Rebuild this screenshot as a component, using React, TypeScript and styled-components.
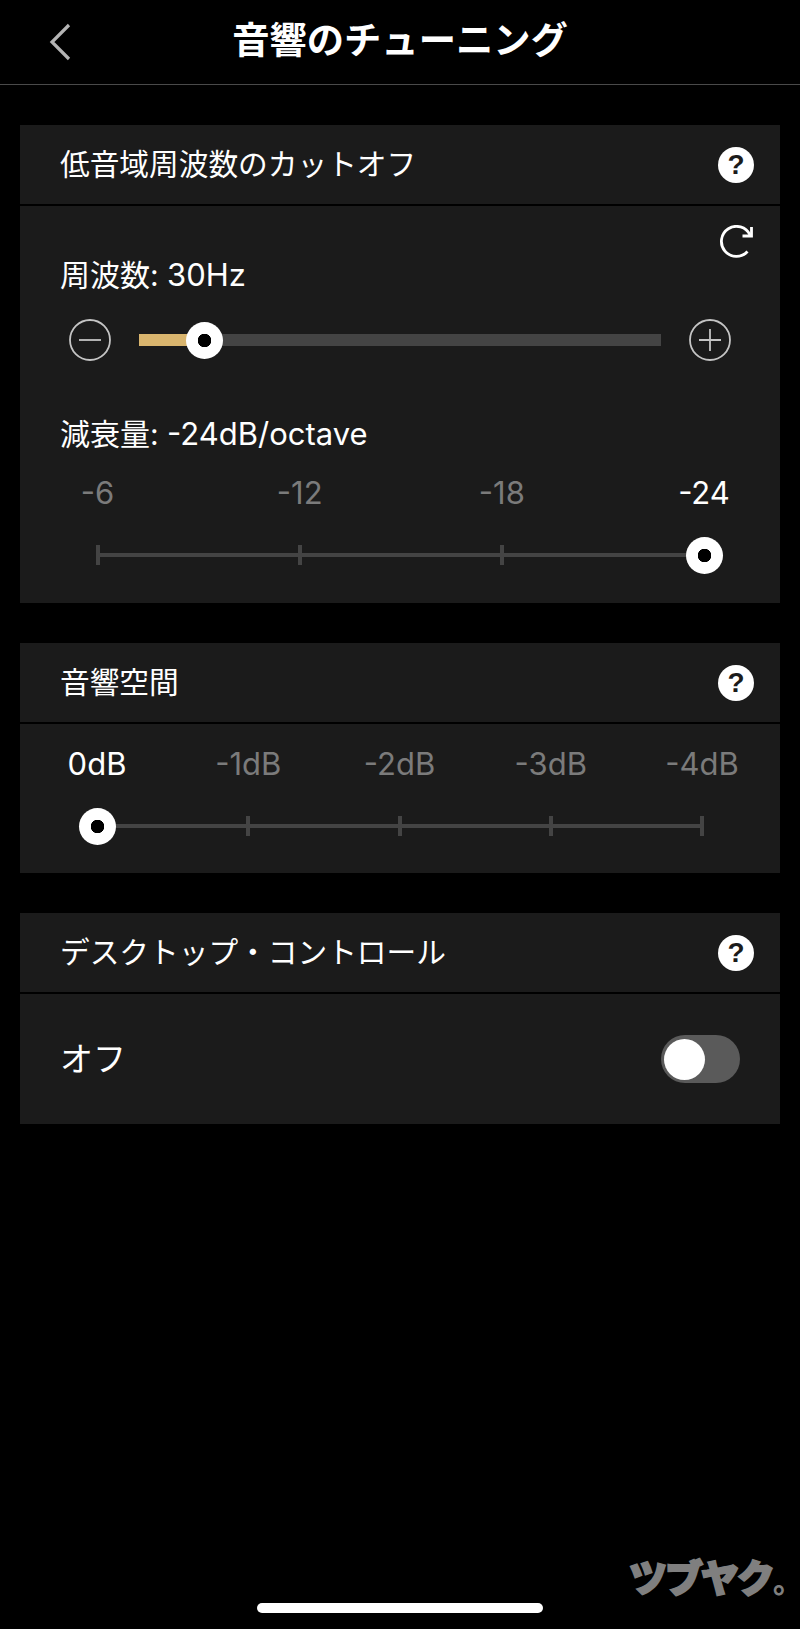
import React from 'react';
import styled, { createGlobalStyle } from 'styled-components';

const GlobalStyle = createGlobalStyle`
  html, body {
    margin: 0;
    padding: 0;
    background: #000;
  }
  * {
    box-sizing: border-box;
  }
`;

const Page = styled.div`
  position: relative;
  display: flex;
  flex-direction: column;
  width: 800px;
  height: 1629px;
  overflow: hidden;
  background: #000;
  color: #fff;
  font-family: Inter, 'Noto Sans CJK JP', sans-serif;
`;

const Header = styled.header`
  position: relative;
  display: flex;
  align-items: center;
  justify-content: center;
  flex-shrink: 0;
  height: 85px;
  padding-bottom: 2px;
  border-bottom: 1px solid #4a4a4a;
`;

const Title = styled.h1`
  margin: 0;
  font-size: 37.3px;
  font-weight: 700;
  line-height: 1;
`;

const BackButton = styled.svg`
  position: absolute;
  left: 48px;
  top: 23px;
  width: 24px;
  height: 38px;
  fill: none;
  stroke: #b4b4b4;
  stroke-width: 3.2;
`;

const Content = styled.main`
  display: flex;
  flex-direction: column;
  gap: 40px;
  padding: 40px 20px 0;
`;

const Section = styled.section`
  display: flex;
  flex-direction: column;
  gap: 2px;
`;

const SectionHead = styled.div`
  display: flex;
  align-items: center;
  justify-content: space-between;
  height: 79px;
  padding: 0 26px 0 40px;
  background: #1b1b1b;
  font-size: 29.7px;
  line-height: 1;
`;

const Help = styled.span`
  display: flex;
  align-items: center;
  justify-content: center;
  width: 36px;
  height: 36px;
  border-radius: 50%;
  background: #fff;
  color: #1b1b1b;
  font-family: 'Liberation Sans', sans-serif;
  font-size: 28px;
  font-weight: 700;
  line-height: 1;
`;

const SectionBody = styled.div<{ $top?: number; $bottom?: number }>`
  display: flex;
  flex-direction: column;
  padding: ${(p) => p.$top ?? 0}px 0 ${(p) => p.$bottom ?? 0}px;
  background: #1b1b1b;
`;

const ResetRow = styled.div`
  display: flex;
  justify-content: flex-end;
  height: 32px;
  padding-right: 27px;
`;

const ResetIcon = styled.svg`
  width: 33px;
  height: 33px;
  fill: none;
  stroke: #fff;
  stroke-width: 2.8;
`;

const Label = styled.div<{ $gap?: number }>`
  height: 36px;
  margin-top: ${(p) => p.$gap ?? 0}px;
  padding-left: 40px;
  font-size: 30px;
  line-height: 36px;
`;

const Value = styled.span`
  font-size: 31px;
`;

const SliderRow = styled.div`
  display: flex;
  align-items: center;
  height: 42px;
  margin-top: 26px;
  padding-left: 49px;
`;

const RoundIcon = styled.svg`
  flex-shrink: 0;
  width: 42px;
  height: 42px;
  fill: none;
  stroke: #c4c4c4;
  stroke-width: 1.8;
`;

const Track = styled.div`
  position: relative;
  flex-shrink: 0;
  width: 522px;
  height: 12px;
  margin: 0 28px;
  background: #444;
`;

const Fill = styled.div`
  height: 100%;
  background: #d9b56e;
`;

const Thumb = styled.span`
  position: absolute;
  top: 50%;
  width: 37px;
  height: 37px;
  margin: -18.5px 0 0 -18.5px;
  border-radius: 50%;
  background: radial-gradient(circle, #000 0 6.5px, #fff 7px);
`;

const StopLabels = styled.div<{ $gap?: number; $left: number; $right: number }>`
  display: flex;
  justify-content: space-between;
  height: 36px;
  margin-top: ${(p) => p.$gap ?? 0}px;
  padding: 0 ${(p) => p.$right}px 0 ${(p) => p.$left}px;
`;

const StopLabel = styled.span<{ $active?: boolean }>`
  display: flex;
  justify-content: center;
  width: 4px;
  color: ${(p) => (p.$active ? '#fff' : '#7b7b7b')};
  font-size: 31px;
  line-height: 36px;
  white-space: nowrap;
`;

const Rail = styled.div<{ $left: number; $right: number }>`
  position: relative;
  display: flex;
  align-items: center;
  justify-content: space-between;
  height: 36px;
  margin: 26px ${(p) => p.$right}px 0 ${(p) => p.$left}px;
  background: linear-gradient(#444, #444) center / 100% 4px no-repeat;
`;

const Tick = styled.span`
  position: relative;
  width: 4px;
  height: 20px;
  background: #444;
`;

const SwitchRow = styled.div`
  display: flex;
  align-items: center;
  justify-content: space-between;
  height: 130px;
  padding: 0 40px;
  background: #1b1b1b;
  font-size: 33px;
  line-height: 1;
`;

const Switch = styled.div`
  display: flex;
  align-items: center;
  width: 79px;
  height: 48px;
  padding-left: 3px;
  border-radius: 24px;
  background: #5a5a5a;
`;

const Knob = styled.span`
  width: 41px;
  height: 41px;
  border-radius: 50%;
  background: #fff;
`;

const Watermark = styled.div`
  position: absolute;
  right: 5px;
  bottom: 34px;
  color: #7f7f7f;
  font-family: 'Noto Sans CJK JP', sans-serif;
  font-size: 38px;
  font-weight: 900;
  line-height: 1;
  letter-spacing: -2px;
  white-space: nowrap;
  -webkit-text-stroke: 2px #7f7f7f;
`;

const WatermarkDot = styled.span`
  font-size: 30px;
  letter-spacing: -8px;
  -webkit-text-stroke: 0;
`;

const HomeIndicator = styled.div`
  position: absolute;
  left: 257px;
  bottom: 16px;
  width: 286px;
  height: 10px;
  border-radius: 5px;
  background: #fff;
`;

const HelpButton = () => <Help>?</Help>;

type ScaleProps = { items: string[]; active: number; left: number; right: number };

const Stops = ({ items, active, left, right }: ScaleProps) => (
  <Rail $left={left} $right={right}>
    {items.map((item, i) => (
      <Tick key={item}>{i === active && <Thumb style={{ left: '50%' }} />}</Tick>
    ))}
  </Rail>
);

const Labels = ({ items, active, left, right, gap }: ScaleProps & { gap?: number }) => (
  <StopLabels $gap={gap} $left={left} $right={right}>
    {items.map((item, i) => (
      <StopLabel key={item} $active={i === active}>
        {item}
      </StopLabel>
    ))}
  </StopLabels>
);

const slopes = ['-6', '-12', '-18', '-24'];
const spaces = ['0dB', '-1dB', '-2dB', '-3dB', '-4dB'];

const App = () => {
  return (
    <Page>
      <GlobalStyle />
      <Header>
        <BackButton viewBox="0 0 24 38">
          <path d="M21 2 L4 19 L21 36" />
        </BackButton>
        <Title>音響のチューニング</Title>
      </Header>
      <Content>
        <Section>
          <SectionHead>
            低音域周波数のカットオフ
            <HelpButton />
          </SectionHead>
          <SectionBody $top={19} $bottom={30}>
            <ResetRow>
              <ResetIcon viewBox="0 0 33 33">
                <path d="M27.5 26.5 A15 15 0 1 1 30 10" />
                <path d="M31.5 2 V11 H22.5" />
              </ResetIcon>
            </ResetRow>
            <Label>
              周波数: <Value>30Hz</Value>
            </Label>
            <SliderRow>
              <RoundIcon viewBox="0 0 42 42">
                <circle cx="21" cy="21" r="20" />
                <path d="M10 21 H32" />
              </RoundIcon>
              <Track>
                <Fill style={{ width: '12.6%' }} />
                <Thumb style={{ left: '12.6%' }} />
              </Track>
              <RoundIcon viewBox="0 0 42 42">
                <circle cx="21" cy="21" r="20" />
                <path d="M10 21 H32 M21 10 V32" />
              </RoundIcon>
            </SliderRow>
            <Label $gap={55}>
              減衰量: <Value>-24dB/octave</Value>
            </Label>
            <Labels items={slopes} active={3} left={75.5} right={74} gap={23} />
            <Stops items={slopes} active={3} left={75.5} right={73.5} />
          </SectionBody>
        </Section>

        <Section>
          <SectionHead>
            音響空間
            <HelpButton />
          </SectionHead>
          <SectionBody $top={22} $bottom={29}>
            <Labels items={spaces} active={0} left={75} right={76} />
            <Stops items={spaces} active={0} left={75} right={76} />
          </SectionBody>
        </Section>

        <Section>
          <SectionHead>
            デスクトップ・コントロール
            <HelpButton />
          </SectionHead>
          <SwitchRow>
            オフ
            <Switch>
              <Knob />
            </Switch>
          </SwitchRow>
        </Section>
      </Content>
      <Watermark>
        ツブヤク<WatermarkDot>。</WatermarkDot>
      </Watermark>
      <HomeIndicator />
    </Page>
  );
};

export default App;
